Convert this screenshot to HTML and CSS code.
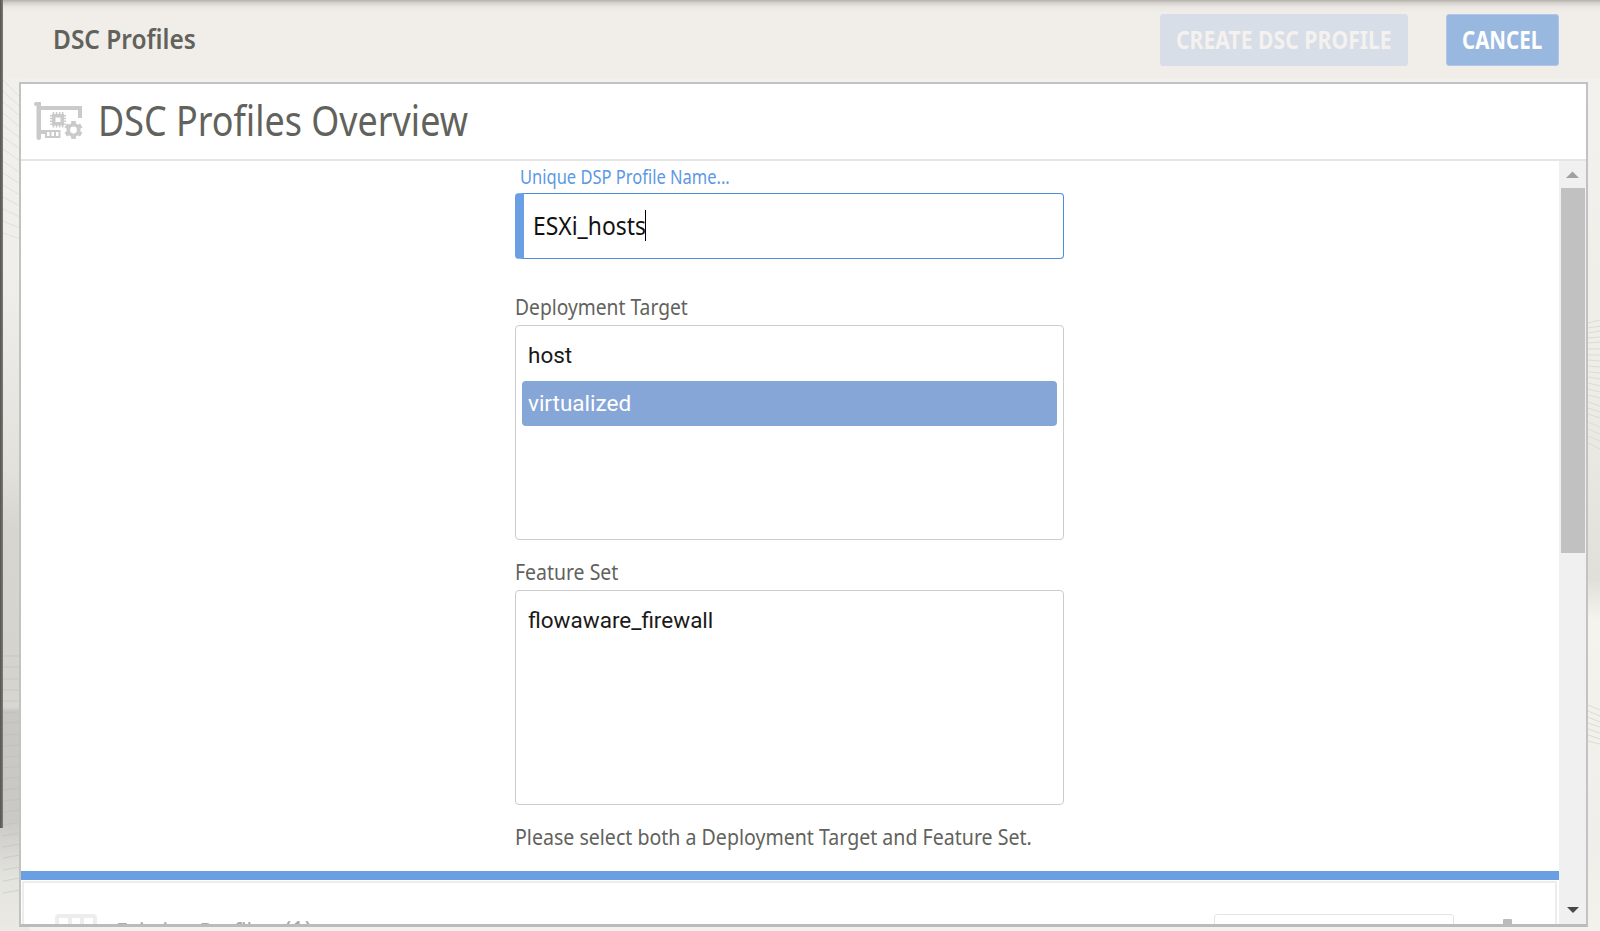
FILE: index.html
```html
<!DOCTYPE html>
<html lang="en">
<head>
<meta charset="utf-8">
<title>DSC Profiles</title>
<link rel="stylesheet" href="styles.css">
</head>
<body>
<div class="app">
  <header class="toolbar">
    <h1 class="toolbar-title"><span class="t t-title">DSC Profiles</span></h1>
    <div class="actions">
      <button class="btn btn-create" disabled><span class="t t-create">CREATE DSC PROFILE</span></button>
      <button class="btn btn-cancel"><span class="t t-cancel">CANCEL</span></button>
    </div>
  </header>
  <div class="backdrop">
    <svg class="lines lines-left" width="17" height="849" viewBox="0 82 17 849">
      <g stroke="#e0dfdb" stroke-width="1" fill="none">
        <path d="M0 83l17 17M0 94l17 16M0 105l17 14M0 116l17 14M0 128l17 13M0 140l17 12M0 152l17 12M0 164l17 12M0 176l17 11M0 188l17 10M0 200l17 9M0 212l17 8M0 224l17 7M0 236l17 6"/>
        <path stroke="#bdbcb8" stroke-opacity=".5" d="M0 659h17M0 670h17M0 682h17M0 693h17M0 704h17M0 716l17-1M0 726l17-1M0 738l17-1M0 749l17-1M0 760l17-1M0 771l17-2M0 782l17-2M0 793l17-2M0 804l17-2M0 815l17-2M0 828l17-3M0 839l17-3M0 850l17-3M0 861l17-3M0 873l17-3M0 884l17-3M0 896l17-3"/>
      </g>
    </svg>
    <svg class="lines lines-right" width="12" height="849" viewBox="0 82 12 849">
      <path fill="none" stroke="#dcdbd6" stroke-width="1" d="M0 326l12-3M0 331l12-2M0 336l12-2M0 341l12-1M0 346l12-1M0 352h12M0 358h12M0 363l12 1M0 369l12 1M0 375l12 1M0 380l12 2M0 386l12 3M0 392l12 3M0 398l12 3M0 405l12 4M0 411l12 4M0 417l12 4M0 425l12 5M0 432l12 5M0 439l12 5M0 446l12 6M0 708l12 5M0 714l12 5M0 720l12 5M0 726l12 4M0 732l12 4M0 738l12 4M0 744l12 3"/>
    </svg>
    <section class="panel">
      <div class="panel-head">
        <svg class="card-icon" width="50" height="40" viewBox="0 0 50 40">
          <g fill="#cacaca">
            <path d="M2 0h5v4h41v12h-4V8H7v20h5v4H7v4q0 2-2.200 2T2.500 36V4H2Q0 4 0 2T2 0z"/>
            <path fill-rule="evenodd" d="M11 28h15.500v8H11zM13 30v4h2.500v-4zm4.500 0v4H20v-4zm4.500 0v4h2.500v-4z"/>
            <path fill-rule="evenodd" d="M18 12h12v11.500H18zM21.500 15.500v4.500h5v-4.500z"/>
            <path d="M18.700 10h1.500v3h-1.500zm3.100 0h1.500v3h-1.500zm3.100 0h1.500v3h-1.500zm3 0h1.500v3h-1.500zM18.700 23h1.500v2.500h-1.500zm3.100 0h1.500v2.500h-1.500zm3.100 0h1.500v2.500h-1.500zm3 0h1.500v2.500h-1.500zM16 13h2v1.400h-2zm0 2.800h2v1.400h-2zm0 2.800h2V20h-2zm0 2.800h2v1.400h-2zM30 13h2v1.400h-2zm0 2.800h2v1.400h-2zm0 2.800h2V20h-2zm0 2.800h2v1.400h-2z"/>
          </g>
          <g transform="translate(39.500 28)">
            <circle r="5.200" fill="none" stroke="#cacaca" stroke-width="3.600"/>
            <g fill="#cacaca">
              <path id="tooth" d="M-2.300-9h4.600v3.500h-4.600z"/>
              <use href="#tooth" transform="rotate(60)"/><use href="#tooth" transform="rotate(120)"/><use href="#tooth" transform="rotate(180)"/><use href="#tooth" transform="rotate(240)"/><use href="#tooth" transform="rotate(300)"/>
            </g>
          </g>
        </svg>
        <h2 class="panel-title"><span class="t t-overview">DSC Profiles Overview</span></h2>
      </div>
      <div class="panel-body">
        <div class="content">
          <form class="form">
            <label class="name-label"><span class="t t-label">Unique DSP Profile Name...</span></label>
            <div class="name-input"><span class="t t-input">ESXi_hosts</span><i class="caret"></i></div>
            <div class="field-label first"><span class="t t-target">Deployment Target</span></div>
            <div class="listbox">
              <div class="option">host</div>
              <div class="option selected">virtualized</div>
            </div>
            <div class="field-label"><span class="t t-feature">Feature Set</span></div>
            <div class="listbox">
              <div class="option">flowaware_firewall</div>
            </div>
            <div class="hint"><span class="t t-hint">Please select both a Deployment Target and Feature Set.</span></div>
          </form>
          <div class="divider"></div>
          <div class="next-card">
            <svg class="grid-icon" width="42" height="30" viewBox="0 0 42 30"><path fill="none" stroke="#ededed" stroke-width="4" d="M2 30V4q0-2 2-2h34q2 0 2 2v26M15 3v27M27 3v27"/></svg>
            <div class="next-title"><span class="t t-next">Existing Profiles <span class="count">(1)</span></span></div>
            <div class="search"></div>
            <div class="knob"></div>
          </div>
        </div>
        <div class="scrollbar">
          <svg width="27" height="27" viewBox="0 0 27 27"><path fill="#a0a0a0" d="M7 17l6.500-6.500L20 17z"/></svg>
          <div class="thumb"></div>
          <svg class="down" width="27" height="27" viewBox="0 0 27 27"><path fill="#484848" d="M8 10h12l-6 6z"/></svg>
        </div>
      </div>
    </section>
  </div>
  <div class="edge"></div>
</div>
</body>
</html>
```
FILE: styles.css
```css
* { box-sizing: border-box; }
body { margin: 0; font-family: "Noto Sans", sans-serif; color: #62625d; }
h1, h2 { margin: 0; font-weight: 400; }
.app { position: relative; width: 1600px; height: 931px; overflow: hidden; display: flex; flex-direction: column; background: #f1eee9; }
.toolbar { height: 79px; flex: none; padding: 0 41px 0 53px; display: flex; justify-content: space-between; align-items: center; background: linear-gradient(#b4b0ad 0, #d6d3cf 3px, #ebe8e3 7px, #f1eee9 12px); }

/* Condensed text: each label is narrowed horizontally from its left edge. */
.t { display: inline-block; white-space: nowrap; transform-origin: 0 50%; }
.t-title { transform: scaleX(.905); }
.t-create { transform: scaleX(.847); }
.t-cancel { transform: scaleX(.82); }
.t-overview { transform: scaleX(.876); }
.t-label { transform: scaleX(.868); }
.t-input { transform: scaleX(.88); margin-right: -16px; }
.t-target { transform: scaleX(.895); }
.t-feature { transform: scaleX(.904); }
.t-hint { transform: scaleX(.91); }
.t-next { transform: scaleX(.85); }

.toolbar-title { font-size: 27px; font-weight: 600; padding-bottom: 2px; }
.actions { display: flex; gap: 38px; }
.btn { height: 52px; border: 1px solid #d8dee8; border-radius: 3px; font: 700 25px/48px "Noto Sans", sans-serif; padding: 0 0 2px 15px; text-align: left; white-space: nowrap; }
.btn-create { width: 248px; background: #d8dee8; color: #f4f1ee; }
.btn-cancel { width: 113px; background: #98b8df; color: #fff; border-color: #b1c7e4; }
.backdrop { flex: 1; position: relative; padding: 3px 12px 4px 19px; background: linear-gradient(#f1f0ec 0, #efeeea 200px, #e2e1dc 390px, #d6d5d0 450px, #d4d3ce 600px, #d8d7d2 628px, #c8c7c3 632px, #cac9c5 740px, #e4e4df 800px, #eae9e4 849px) 0 0 / 30px 100% no-repeat, linear-gradient(#f2f1ed 0, #eeede8 300px, #e0dfda 500px, #f4f3ee 540px, #efeeea 760px, #f2f1eb 849px); }
.lines { position: absolute; top: 0; }
.lines-left { left: 3px; }
.lines-right { right: 0; }
.panel { position: relative; height: 845px; border: 2px solid #c3c2c3; border-bottom: 3px solid #bbb; background: #fff; display: flex; flex-direction: column; }
.panel-head { height: 77px; flex: none; border-bottom: 2px solid #e5e5e5; padding-left: 12.500px; display: flex; align-items: center; }
.panel-title { font-size: 41px; line-height: 74px; margin-left: 14.500px; padding-bottom: 4px; }
.panel-body { flex: 1; min-height: 0; display: flex; }
.content { flex: 1; overflow: hidden; display: flex; flex-direction: column; }
.form { width: 549px; margin-left: 494px; height: 710px; flex: none; }
.name-label { display: block; height: 32px; padding-left: 4.500px; font-size: 19px; line-height: 33px; color: #5b98e6; }
.name-input { height: 66px; border: 1px solid #4a8ee0; border-left: 9px solid #6a9fe4; border-radius: 4px; padding: 0 0 2px 9px; font-size: 26px; color: #111; display: flex; align-items: center; }
.caret { width: 1px; height: 31px; background: #000; }
.field-label { height: 50px; line-height: 64px; font-size: 21.500px; }
.field-label.first { height: 66px; line-height: 96px; }
.listbox { height: 215px; border: 1px solid #ccc; border-radius: 4px; padding: 7px 6px; font: 22.500px/44px Roboto, sans-serif; color: #1a1a1a; display: flex; flex-direction: column; gap: 3px; }
.option { height: 45px; padding-left: 6px; border-radius: 4px; }
.option.selected { background: #86a6d7; color: #fff; }
.hint { font-size: 21.500px; line-height: 63px; }
.divider { height: 9px; flex: none; background: #6a9fe4; }
.next-card { height: 120px; flex: none; margin: 1px 2px 0 1px; border: 2px solid #ededed; padding: 31px 0 0 31px; display: flex; }
.next-title { margin: -3px 0 0 19px; font-size: 25px; line-height: 40px; color: #aaa; }
.count { font-size: 28px; line-height: 1; margin-left: 5px; }
.search { width: 240px; height: 50px; border: 1px solid #e4e4e4; border-radius: 3px; margin-left: auto; }
.knob { width: 9px; height: 20px; background: #bbb; border-radius: 1px; margin: 5px 43px 0 49px; }
.scrollbar { width: 27px; background: #f0f0f0; display: flex; flex-direction: column; }
.thumb { height: 365px; margin: 0 1px 0 2px; background: #c1c1c1; flex: none; }
.down { margin-top: auto; }
.edge { position: absolute; left: 0; top: 0; width: 3px; height: 828px; background: linear-gradient(90deg, #555451, #7c7b78); }
```
